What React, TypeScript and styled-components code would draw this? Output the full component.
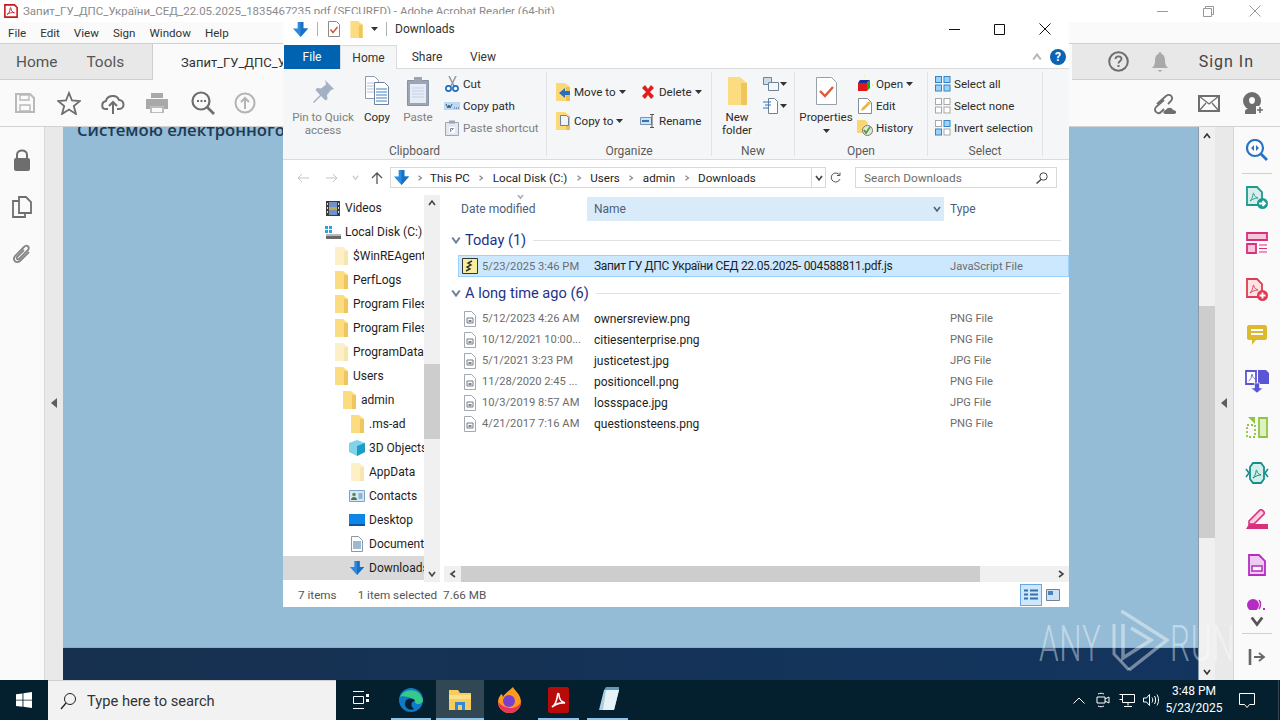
import React from "react";
import styled, { createGlobalStyle } from "styled-components";

const GlobalStyle = createGlobalStyle`
    html, body {
        margin: 0;
        padding: 0;
        background: #fff;
    }
    body {
        font-family: "Roboto", "Liberation Sans", sans-serif;
        overflow: hidden;
    }
    * {
        box-sizing: border-box;
    }
    svg {
        display: block;
        flex: none;
    }
`;

type IconProps = { size?: number };

const Ico = ({ w, h, children }: { w: number; h?: number; children: React.ReactNode }) => (
    <svg width={w} height={h ?? w} viewBox={`0 0 ${w} ${h ?? w}`} fill="none">
        {children}
    </svg>
);

// explorer icons
const DownArrow = ({ size = 18 }: IconProps) => (
    <svg width={size} height={size} viewBox="0 0 18 18">
        <path d="M6 1h6v7h5l-8 9-8-9h5z" fill="#2b8ade" />
        <path d="M9 17l8-9h-5V1H9z" fill="#1b6fc2" />
    </svg>
);

const Folder = ({ pale, w = 13, h = 18 }: { pale?: boolean; w?: number; h?: number }) => (
    <svg width={w} height={h} viewBox="0 0 13 18">
        <path d="M0 0h8l5 4v14H0z" fill={pale ? "#fdf0c8" : "#fcdc80"} />
        <path d="M9 4h4v14H9z" fill={pale ? "#f8e6b0" : "#f2c55c"} />
    </svg>
);

const CheckDoc = ({ size = 16 }: IconProps) => (
    <svg width={size} height={size} viewBox="0 0 16 16" fill="none">
        <path d="M2.5.5h8l3 3v12h-11z" fill="#fff" stroke="#8b8b8b" />
        <path d="M4.5 8.5l2.5 3 4.5-5.5" stroke="#d9573a" strokeWidth="1.6" />
    </svg>
);

const Caret = () => (
    <svg width="7" height="4" viewBox="0 0 7 4">
        <path d="M0 0h7L3.5 4z" fill="#333" />
    </svg>
);

const PinIcon = () => (
    <Ico w={24}>
        <path d="M14 1l9 9-3 1-4 5 .5 4-2 1.5-4.5-4.5-7 7-1-1 7-7L4.5 11 6 9l4 .5 5-4z" fill="#a3b1c4" />
    </Ico>
);

const CopyIcon = () => (
    <Ico w={26} h={30}>
        <path d="M1.5.5h9l4 4v18h-13z" fill="#fff" stroke="#8c9bb0" />
        <path d="M3 7h9M3 10h9M3 13h9M3 16h9" stroke="#b4c3d8" />
        <path d="M10.5 6.5h10l4 4v18h-14z" fill="#fff" stroke="#6d7f99" />
        <path d="M12 13h11M12 16h11M12 19h11M12 22h11M12 25h11" stroke="#3f7fc9" />
    </Ico>
);

const PasteIcon = () => (
    <Ico w={22} h={30}>
        <path d="M.5 4.5h21v25H.5z" fill="#9aa5b5" stroke="#8793a5" />
        <path d="M3 8h16v19H3z" fill="#e6ecf5" />
        <path d="M5 12h12M5 15h12M5 18h12M5 21h12" stroke="#c5d1e2" />
        <path d="M7 4V1h8v3l2 2H5z" fill="#9aa5b5" />
    </Ico>
);

const Scissors = () => (
    <Ico w={16}>
        <path d="M5 0l5 10M12 0L7 10" stroke="#8f99a8" strokeWidth="1.5" />
        <circle cx="4.5" cy="12.5" r="2.6" stroke="#1e6cbd" strokeWidth="1.6" />
        <circle cx="11.5" cy="12.5" r="2.6" stroke="#1e6cbd" strokeWidth="1.6" />
    </Ico>
);

const CopyPathIcon = () => (
    <Ico w={16} h={10}>
        <path d="M0 1h16v8H0z" fill="#bcd8f5" />
        <path d="M2 3l2 4 1-3 1 3 2-4M10 7h1M12 7h1M14 7h1" stroke="#36597f" />
    </Ico>
);

const ShortcutIcon = () => (
    <Ico w={14} h={16}>
        <path d="M.5 2.5h13v13H.5z" fill="#e3e8f0" stroke="#9aa5b5" />
        <path d="M4 .5h6v3H4z" fill="#9aa5b5" />
        <path d="M4 7h6v6H4z" fill="#fff" />
        <path d="M5.5 12V8.5h3M8.5 8.5l-2 2" stroke="#7d8ba0" />
    </Ico>
);

const MoveToIcon = ({ copy }: { copy?: boolean }) => (
    <Ico w={14} h={18}>
        <path d="M0 0h9l5 4v14H0z" fill="#fbd976" />
        <path d="M10 4h4v14h-4z" fill="#eebf52" />
        {copy ? (
            <path d="M4.5 3.5h6l2 2v8h-8z" fill="#f1f3f6" stroke="#6f7f95" />
        ) : (
            <path d="M14 8v4H9v3L3 10l6-5v3z" fill="#2c6ebe" />
        )}
    </Ico>
);

const DeleteIcon = () => (
    <Ico w={14}>
        <path d="M1 3l3-3 3 4 3-4 3 3-4 4 4 4-3 3-3-4-3 4-3-3 4-4z" fill="#e21b1b" />
    </Ico>
);

const RenameIcon = () => (
    <Ico w={17} h={14}>
        <path d="M.5 3.5h11v7H.5z" fill="#cfe2f5" stroke="#7d95ad" />
        <path d="M2 6h7v2H2z" fill="#2c74c4" />
        <path d="M10 .5h4M10 13.5h4M12 .5v13" stroke="#555" />
    </Ico>
);

const NewFolderIcon = () => (
    <Ico w={19} h={28}>
        <path d="M0 0h12l7 6v22H0z" fill="#fcdc80" />
        <path d="M13 6h6v22h-6z" fill="#f2c55c" />
    </Ico>
);

const NewItemIcon = () => (
    <Ico w={16} h={14}>
        <path d="M.5.5h8v7h-8z" fill="#cfdcea" stroke="#6f8398" />
        <path d="M5.5 5.5h10v8h-10z" fill="#f5f7fa" stroke="#6f8398" />
    </Ico>
);

const EasyAccessIcon = () => (
    <Ico w={16} h={16}>
        <path d="M5.5.5h6l3 3v12h-9z" fill="#fff" stroke="#6f8398" />
        <path d="M0 4h8M2 7h6M0 10h5" stroke="#2c74c4" />
    </Ico>
);

const PropertiesIcon = () => (
    <Ico w={21} h={28}>
        <path d="M.5.5h15l5 5v22H.5z" fill="#fff" stroke="#9aa0a8" />
        <path d="M4 14l5 5 8-9" stroke="#dd5b36" strokeWidth="2.4" />
    </Ico>
);

const OpenIcon = () => (
    <Ico w={16}>
        <path d="M1 7h9v8H1z" fill="#e01717" />
        <path d="M3 4h10l-3 3H1z" fill="#1f2d9c" />
        <path d="M10 7l3-3v8l-3 3z" fill="#1ba81b" />
        <path d="M7 0h1M15 9h1" stroke="#e8d800" />
    </Ico>
);

const EditIcon = () => (
    <Ico w={14} h={16}>
        <path d="M.5.5h9l4 4v11H.5z" fill="#fff" stroke="#858d98" />
        <path d="M3 13l1-3 7-7 2 2-7 7z" fill="#e9b84c" />
    </Ico>
);

const HistoryIcon = () => (
    <Ico w={16}>
        <path d="M0 0h8l3 3v10H0z" fill="#f9d873" />
        <circle cx="10.5" cy="10.5" r="5" fill="#e4e4e4" stroke="#7a7a7a" />
        <path d="M7 10l2 3 4-6" stroke="#4aa02c" strokeWidth="1.6" />
    </Ico>
);

const SelectGrid = ({ mode }: { mode: "all" | "none" | "invert" }) => {
    const on = (i: number) => (mode === "all" ? true : mode === "none" ? false : i === 1 || i === 2);
    return (
        <Ico w={16}>
            {[0, 1, 2, 3].map((i) => (
                <rect
                    key={i}
                    x={0.5 + (i % 2) * 8.5}
                    y={0.5 + Math.floor(i / 2) * 8.5}
                    width="6"
                    height="6"
                    fill={on(i) ? "#9fd0f5" : "#fff"}
                    stroke={on(i) ? "#2f86c9" : "#a8a8a8"}
                />
            ))}
        </Ico>
    );
};

const VideosIcon = () => (
    <Ico w={14} h={15}>
        <path d="M0 0h14v15H0z" fill="#3b3b3b" />
        <path d="M3 1h8v13H3z" fill="#6f93c9" />
        <path d="M3 6h8v3H3z" fill="#c5a94b" />
        <path d="M1 2h1v2H1zM1 6h1v2H1zM1 10h1v2H1zM12 2h1v2h-1zM12 6h1v2h-1zM12 10h1v2h-1z" fill="#ddd" />
    </Ico>
);

const DiskIcon = () => (
    <Ico w={16} h={14}>
        <path d="M1 9h15v5H1z" fill="#686868" />
        <path d="M1 9h15v2H1z" fill="#b9b9b9" />
        <path d="M0 1h3v3H0zM4 1h3v3H4zM0 5h3v3H0zM4 5h3v3H4z" fill="#2aa3dc" />
    </Ico>
);

const ObjectsIcon = () => (
    <Ico w={16}>
        <path d="M8 0l8 3v9l-8 4-8-4V3z" fill="#7fd3ea" />
        <path d="M8 6l8-3v9l-8 4z" fill="#1b9cc9" />
    </Ico>
);

const ContactsIcon = () => (
    <Ico w={16} h={12}>
        <path d="M.5.5h15v11H.5z" fill="#d6e7f7" stroke="#7ba3c9" />
        <circle cx="5" cy="4.5" r="1.8" fill="#5b8c5a" />
        <path d="M2 10c0-4 6-4 6 0z" fill="#47793f" />
        <path d="M9.5 4h4M9.5 6h4M9.5 8h4" stroke="#4d7fb3" />
    </Ico>
);

const DesktopIcon = () => (
    <Ico w={16} h={12}>
        <path d="M0 0h16v12H0z" fill="#0d86e6" />
        <path d="M0 10h16v2H0z" fill="#0558a8" />
    </Ico>
);

const DocumentsIcon = () => (
    <Ico w={12} h={16}>
        <path d="M.5.5h7l4 4v11H.5z" fill="#fff" stroke="#8a98a8" />
        <path d="M2 6h8M2 8h8M2 10h8M2 12h8" stroke="#3f73aa" />
    </Ico>
);

const ScriptIcon = () => (
    <Ico w={16}>
        <path d="M.5.5h15v15H.5z" fill="#f7ef9e" stroke="#333" />
        <path d="M10 3L6 5l3 2-4 2 3 2-4 2" stroke="#333" strokeWidth="1.4" />
    </Ico>
);

const ImageFileIcon = () => (
    <Ico w={12} h={16}>
        <path d="M.5.5h7l4 4v11H.5z" fill="#fff" stroke="#a3a9b0" />
        <path d="M3 7h6v5H3z" fill="#fff" stroke="#737b85" />
        <path d="M4.5 9h3v2h-3z" fill="#7d858f" />
    </Ico>
);

const Chevron = ({ dir, color = "#555", size = 8 }: { dir: "up" | "down" | "left" | "right"; color?: string; size?: number }) => {
    const paths = { up: "M1 6l3-4 3 4", down: "M1 2l3 4 3-4", left: "M6 1L2 4l4 3", right: "M2 1l4 3-4 3" };
    return (
        <svg width={size} height={size} viewBox="0 0 8 8" fill="none">
            <path d={paths[dir]} stroke={color} strokeWidth="1.6" />
        </svg>
    );
};

// acrobat icons
const PdfMark = ({ size = 14 }: IconProps) => (
    <svg width={size} height={size} viewBox="0 0 16 16" fill="none">
        <path d="M1 1h11l3 3v11H1z" fill="#fff" stroke="#c8161d" strokeWidth="1.8" />
        <path d="M3.5 12c2-1 3.5-4 3.5-7 0-1.500 1-1 1 0 0 3 2 4.500 4 5-3-.5-6 0-8.500 2z" stroke="#c8161d" />
    </svg>
);

const grey = "#6e6e6e";

const SaveTool = () => (
    <Ico w={20}>
        <path d="M1 1h14l4 4v14H1z" fill="#fafafa" stroke="#b9b9b9" strokeWidth="2" />
        <path d="M5 2h9v5H5zM5 12h10v6H5z" stroke="#b9b9b9" strokeWidth="1.4" />
    </Ico>
);
const StarTool = () => (
    <Ico w={24}>
        <path d="M12 2l3 7.500 8 .5-6.200 5 2.200 8-7-4.500L5 23l2.200-8L1 10l8-.5z" stroke={grey} strokeWidth="1.8" />
    </Ico>
);
const UploadTool = () => (
    <Ico w={24}>
        <path d="M7 18H5c-5 0-5-7 0-8 1-6 11-7 13-1 6 0 6 9 0 9h-2" stroke={grey} strokeWidth="2" />
        <path d="M12 23V11M8 15l4-4 4 4" stroke={grey} strokeWidth="2" />
    </Ico>
);
const PrintTool = () => (
    <Ico w={22} h={20}>
        <path d="M5 0h12v5H5zM0 6h22v10h-4v-3H4v3H0z" fill="#a9a9a9" />
        <path d="M5 14h12v6H5z" stroke="#a9a9a9" strokeWidth="1.500" />
    </Ico>
);
const SearchTool = ({ color = grey }: { color?: string }) => (
    <Ico w={24}>
        <circle cx="10" cy="10" r="8.500" stroke={color} strokeWidth="2.200" />
        <path d="M16 16l7 7" stroke={color} strokeWidth="2.600" />
        <path d="M6 10h2M9.500 10h2M13 10h2" stroke={color} strokeWidth="2" />
    </Ico>
);
const UpTool = () => (
    <Ico w={22}>
        <circle cx="11" cy="11" r="9.500" stroke="#b4b4b4" strokeWidth="2" />
        <path d="M11 17V6M7 10l4-4 4 4" stroke="#b4b4b4" strokeWidth="2" />
    </Ico>
);
const LinkTool = () => (
    <Ico w={24}>
        <path d="M3 13l9-8c4-3 8 1 5 5l-3 3" stroke={grey} strokeWidth="1.800" />
        <path d="M10 9L2 16c-3 4 2 8 5 5l3-3" stroke={grey} strokeWidth="1.800" />
        <path d="M12 23c-4 0-3-4 0-4 1-3 6-3 7 0 4 0 4 4 1 4z" fill={grey} />
    </Ico>
);
const MailTool = () => (
    <Ico w={22} h={17}>
        <path d="M1 1h20v15H1z" stroke={grey} strokeWidth="2" />
        <path d="M1 1l10 8 10-8M1 16l7-8M21 16l-7-8" stroke={grey} strokeWidth="1.300" />
    </Ico>
);
const UserTool = () => (
    <Ico w={22}>
        <circle cx="10" cy="9" r="9" fill={grey} />
        <path d="M7 8c0-4 6-4 6 0 0 3-2 4-3 4S7 11 7 8z" fill="#fafafa" />
        <path d="M3 19c1-4 13-4 14 0v3H3z" fill={grey} />
        <path d="M14 14h8v8h-8z" fill="#fafafa" />
        <path d="M18 15v6M15 18h6" stroke={grey} strokeWidth="1.600" />
    </Ico>
);
const HelpTool = () => (
    <svg width="21" height="21" viewBox="0 0 21 21" fill="none">
        <circle cx="10.500" cy="10.500" r="9.300" stroke={grey} strokeWidth="2" />
        <path d="M7.500 8c0-3.500 6-3.500 6 0 0 2-3 2-3 4.500" stroke={grey} strokeWidth="1.800" />
        <path d="M9.500 14h2v2h-2z" fill={grey} />
    </svg>
);
const BellTool = () => (
    <Ico w={18} h={20}>
        <path d="M9 0c1 0 1.500 1 1.500 2 3 1 3.500 4 3.500 7 0 3 1 5 3 7H1c2-2 3-4 3-7 0-3 .5-6 3.500-7C7.500 1 8 0 9 0z" fill="#a9a9a9" />
        <path d="M6.500 18h5L9 20z" fill="#a9a9a9" />
    </Ico>
);
const LockTool = () => (
    <Ico w={18} h={22}>
        <path d="M4 10V6c0-6 10-6 10 0v4" stroke={grey} strokeWidth="2" />
        <rect x="1" y="9" width="16" height="13" rx="2" fill={grey} />
    </Ico>
);
const PagesTool = () => (
    <Ico w={20} h={22}>
        <path d="M7 1h7l5 5v11H7z" stroke={grey} strokeWidth="1.800" />
        <path d="M7 5H1v16h12v-4" stroke={grey} strokeWidth="1.800" />
    </Ico>
);
const ClipTool = () => (
    <Ico w={20} h={22}>
        <path d="M17 9l-9 9c-4 3-8-1-5-5L12 4c3-3 6 0 4 3l-9 9c-1 1-3 0-2-2l7-7" stroke="#848484" strokeWidth="1.800" />
    </Ico>
);

const SideDoc = ({ stroke, fill, badge, sign }: { stroke: string; fill: string; badge: string; sign: string }) => (
    <Ico w={22} h={23}>
        <path d="M1 1h10l5 5v13H1z" fill={fill} stroke={stroke} strokeWidth="1.800" />
        <path d="M4 15c2-2 3-5 3-7 0-1 1-1 1 0 0 2 2 3 4 4-3 0-5 1-8 3z" stroke={stroke} strokeWidth=".9" />
        <circle cx="16.500" cy="17.500" r="5.500" fill={badge} />
        <path d={sign} stroke="#fff" strokeWidth="1.800" />
    </Ico>
);

function SearchGlass() {
    return (
        <Ico w={22}>
            <circle cx="9" cy="9" r="8" fill="#fff" stroke="#2a72c4" strokeWidth="2.200" />
            <path d="M15 15l6 6" stroke="#2a72c4" strokeWidth="2.800" />
            <path d="M8 6L5 9l3 3zM10 6l3 3-3 3z" fill="#2a72c4" />
        </Ico>
    );
}

const rightIcons = [
    <SideDoc key="b" stroke="#1d9a8e" fill="#d9eeec" badge="#1d9a8e" sign="M13 17.500h6M16.500 15l2.500 2.500-2.500 2.500" />,
    <Ico w={22} h={22} key="c">
        <path d="M1 1h20v7H1z" fill="#f7c6dc" stroke="#d9307e" strokeWidth="1.800" />
        <path d="M1 12h9v9H1z" fill="#f7c6dc" stroke="#d9307e" strokeWidth="1.800" />
        <path d="M13 13h8M13 16.500h8M13 20h8" stroke="#d9307e" />
    </Ico>,
    <SideDoc key="d" stroke="#e03b52" fill="#fbe3e6" badge="#e03b52" sign="M13.500 17.500h6M16.500 14.500v6" />,
    <Ico w={20} h={20} key="e">
        <path d="M2 0h16c1 0 2 1 2 2v11c0 1-1 2-2 2H9l-4 5v-5H2c-1 0-2-1-2-2V2C0 1 1 0 2 0z" fill="#dcb92f" />
        <path d="M4 5h12M4 9h12" stroke="#fff" strokeWidth="1.800" />
    </Ico>,
    <Ico w={24} h={24} key="f">
        <path d="M1 2h10v13H1z" fill="#fff" stroke="#5a55d6" strokeWidth="1.800" />
        <path d="M3.500 12c2-1 3-3 3-6 0-1 1-1 1 0 0 2 1 3 2.500 4" stroke="#5a55d6" strokeWidth=".8" />
        <path d="M13 1h8l3 3v11H13z" fill="#5a55d6" />
        <path d="M9.500 14h5v5h3.500l-6 5-6-5h3.500z" fill="#5a55d6" stroke="#fafafa" strokeWidth=".6" />
    </Ico>,
    <Ico w={22} h={22} key="g">
        <path d="M1 9h8v12H1z" stroke="#8ec63f" strokeWidth="1.800" strokeDasharray="2 2" />
        <path d="M13 2h8v19h-8z" fill="#dff0c4" stroke="#8ec63f" strokeWidth="1.800" />
        <path d="M2 1l7 0v7z" fill="#8ec63f" />
    </Ico>,
    <Ico w={24} h={22} key="h">
        <path d="M5 5l3-4h8l3 4v12l-3 4H8l-3-4z" fill="#d4eeea" stroke="#14908a" strokeWidth="1.800" />
        <path d="M1 7l3 4-3 4M23 7l-3 4 3 4" stroke="#14908a" strokeWidth="1.600" />
        <path d="M8 16c2-2 3-5 3-7 0-1 1-1 1 0 0 2 2 3 4 4-3 0-5 1-8 3z" stroke="#14908a" />
    </Ico>,
    <Ico w={22} h={20} key="i">
        <path d="M3 12L14 1c2-1 5 2 4 4L8 15H3z" fill="#f9cfe2" stroke="#d9307e" strokeWidth="1.600" />
        <path d="M0 20l3-5h19v5z" fill="#d9307e" />
    </Ico>,
    <Ico w={18} h={22} key="j">
        <path d="M1 1h10l6 6v14H1z" fill="#eecbf2" stroke="#b42cc2" strokeWidth="1.800" />
        <path d="M4 12h10v5H4z" fill="#fff" stroke="#b42cc2" strokeWidth="1.500" />
    </Ico>,
];

// Page
const Screen = styled.div`
    position: relative;
    width: 1280px;
    height: 720px;
    overflow: hidden;
    display: flex;
    flex-direction: column;
`;

const AcrobatWindow = styled.div`
    height: 680px;
    display: flex;
    flex-direction: column;
    background: #fff;
`;

const AppTitleBar = styled.div`
    height: 22px;
    display: flex;
    align-items: center;
    padding: 0 0 0 4px;
    gap: 5px;
    background: #fff;
    font-size: 11.5px;
    color: #8a8a8a;
    white-space: nowrap;
`;

const AppControls = styled.div`
    margin-left: auto;
    display: flex;
    align-items: center;
    gap: 35px;
    padding-right: 19px;
`;

const MenuBar = styled.div`
    height: 21px;
    display: flex;
    align-items: center;
    gap: 14px;
    padding: 0 8px;
    background: #fafafa;
    font-size: 11.6px;
    color: #333;
`;

const TabRow = styled.div`
    height: 37px;
    display: flex;
    align-items: stretch;
    background: #e8e8e8;
    border-top: 1px solid #cfcfcf;
    border-bottom: 1px solid #cfcfcf;
`;

const AppTab = styled.div<{ $left: number }>`
    display: flex;
    align-items: center;
    font-size: 15.4px;
    color: #555;
    margin-left: ${(p) => p.$left}px;
`;

const OpenTab = styled.div`
    width: 920px;
    margin-left: 28px;
    margin-bottom: -1px;
    padding-left: 28px;
    display: flex;
    align-items: center;
    background: #fafafa;
    border-left: 1px solid #cfcfcf;
    font-size: 13px;
    color: #333;
`;

const TabRight = styled.div`
    margin-left: auto;
    display: flex;
    align-items: center;
    padding-right: 26px;
`;

const SignIn = styled.span`
    margin-left: 30px;
    font-size: 16px;
    color: #444;
    letter-spacing: 1px;
`;

const ToolRow = styled.div`
    height: 47px;
    display: flex;
    align-items: center;
    padding-left: 15px;
    background: #fafafa;
    border-bottom: 1px solid #d2d2d2;
`;

const ToolGap = styled.span<{ $w: number }>`
    width: ${(p) => p.$w}px;
    flex: none;
`;

const Spacer = styled.span`
    flex: 1;
`;

const DocArea = styled.div`
    flex: 1;
    min-height: 0;
    display: flex;
`;

const LeftRail = styled.div`
    width: 45px;
    display: flex;
    flex-direction: column;
    align-items: center;
    padding-top: 22px;
    gap: 25px;
    padding-right: 1px;
    background: #fafafa;
    border-right: 1px solid #d8d8d8;
`;

const Gutter = styled.div`
    width: 18px;
    display: flex;
    align-items: center;
    justify-content: center;
    padding-bottom: 2px;
    background: #e9e9e9;
`;

const GutterRight = styled(Gutter)`
    border-right: 1px solid #d8d8d8;
    width: 19px;
`;

const Triangle = styled.span`
    width: 0;
    height: 0;
    border-top: 5px solid transparent;
    border-bottom: 5px solid transparent;
    border-right: 6px solid #5e5e5e;
`;

const PageView = styled.div`
    flex: 1;
    display: flex;
    flex-direction: column;
    min-width: 0;
    overflow: hidden;
`;

const PageLight = styled.div`
    flex: 1;
    background: #94bcd6;
    padding-left: 14px;
    overflow: hidden;
`;

const PageHeading = styled.div`
    margin-top: -8px;
    font-family: "Open Sans", sans-serif;
    font-weight: 600;
    font-size: 16.7px;
    line-height: 22px;
    color: #1d3a55;
    white-space: nowrap;
`;

const PageDark = styled.div`
    height: 33px;
    background: linear-gradient(90deg, #17304f, #12355f);
    border-top: 1px solid #8aaecb;
`;

const DocScroll = styled.div`
    width: 17px;
    display: flex;
    flex-direction: column;
    align-items: center;
    background: #f0f0f0;
    border-left: 1px solid #8a9aa6;
`;

const ArrowCell = styled.div`
    height: 17px;
    flex: none;
    display: flex;
    align-items: center;
    justify-content: center;
`;

const DocThumb = styled.div`
    width: 100%;
    height: 232px;
    margin-top: 162px;
    margin-bottom: auto;
    background: #cdcdcd;
`;

const RightRail = styled.div`
    width: 46px;
    display: flex;
    flex-direction: column;
    align-items: center;
    background: #fafafa;
    overflow: hidden;
`;

const RailSlot = styled.div`
    height: 46px;
    width: 100%;
    flex: none;
    display: flex;
    align-items: center;
    justify-content: center;
`;

const RailRule = styled.div`
    width: 30px;
    height: 1px;
    flex: none;
    background: #d0d0d0;
`;

const RailClip = styled.div`
    height: 11px;
    margin-top: 11px;
    flex: none;
    display: flex;
    align-items: flex-start;
    overflow: hidden;
`;

const RailMore = styled.div`
    height: 21px;
    margin-bottom: 2px;
    flex: none;
    display: flex;
    align-items: center;
    justify-content: center;
`;

// explorer window
const Explorer = styled.div`
    position: absolute;
    left: 283px;
    top: 14px;
    width: 786px;
    height: 593px;
    display: flex;
    flex-direction: column;
    background: #fff;
    font-size: 12px;
    color: #1e1e1e;
`;

const ExTitle = styled.div`
    height: 30px;
    flex: none;
    display: flex;
    align-items: center;
    padding-left: 9px;
    color: #333;
`;

const Sep = styled.span`
    width: 1px;
    height: 14px;
    margin: 0 8px;
    background: #b0b0b0;
`;

const QuickIcon = styled.span<{ $right: number }>`
    margin-right: ${(p) => p.$right}px;
`;

const WinControls = styled.div`
    margin-left: auto;
    display: flex;
    align-items: center;
    padding-right: 18px;
    gap: 34px;
`;

const ExTabs = styled.div`
    height: 25px;
    flex: none;
    display: flex;
    align-items: flex-end;
    padding-left: 1px;
    position: relative;
    z-index: 1;
`;

const FileTab = styled.div`
    width: 56px;
    height: 24px;
    display: flex;
    align-items: center;
    justify-content: center;
    background: #0063b1;
    color: #fff;
`;

const RibbonTab = styled.div<{ $active?: boolean; $w: number }>`
    width: ${(p) => p.$w}px;
    height: 24px;
    display: flex;
    align-items: center;
    justify-content: center;
    color: #333;
    background: ${(p) => (p.$active ? "#f5f6f7" : "transparent")};
    border: ${(p) => (p.$active ? "1px solid #dadbdc" : "0")};
    border-bottom: 0;
`;

const TabEnd = styled.div`
    margin-left: auto;
    height: 24px;
    display: flex;
    align-items: center;
    gap: 8px;
    padding-right: 3px;
`;

const HelpBubble = styled.span`
    width: 16px;
    height: 16px;
    border-radius: 50%;
    background: #0a64b4;
    color: #fff;
    font-size: 12px;
    font-weight: 700;
    display: flex;
    align-items: center;
    justify-content: center;
`;

const Ribbon = styled.div`
    height: 92px;
    flex: none;
    display: flex;
    background: #f5f6f7;
    border-top: 1px solid #dadbdc;
    border-bottom: 1px solid #dadbdc;
    margin-top: -1px;
    font-size: 11.6px;
`;

const Group = styled.div<{ $w: number }>`
    width: ${(p) => p.$w}px;
    flex: none;
    display: flex;
    flex-direction: column;
    position: relative;
    &::after {
        content: "";
        position: absolute;
        right: 0;
        top: 3px;
        bottom: 3px;
        width: 1px;
        background: #e1e3e6;
    }
`;

const GroupBody = styled.div<{ $pad: number; $gap?: number }>`
    height: 74px;
    display: flex;
    padding: 4px 0 0 ${(p) => p.$pad}px;
    gap: ${(p) => p.$gap ?? 0}px;
`;

const GroupLabel = styled.div`
    text-align: center;
    font-size: 12px;
    line-height: 16px;
    padding-right: 1px;
    color: #5b5b5b;
`;

const BigButton = styled.div<{ $w: number; $muted?: boolean }>`
    width: ${(p) => p.$w}px;
    flex: none;
    display: flex;
    flex-direction: column;
    align-items: center;
    text-align: center;
    line-height: 13px;
    color: ${(p) => (p.$muted ? "#808080" : "#2b2b2b")};
`;

const BigIcon = styled.div`
    height: 35px;
    display: flex;
    align-items: center;
    justify-content: center;
    margin-bottom: 3px;
`;

const CaretBelow = styled.div`
    margin-top: 5px;
`;

const SmallStack = styled.div<{ $gap?: number; $top?: number; $w?: number; $left?: number }>`
    display: flex;
    flex-direction: column;
    flex: none;
    gap: ${(p) => p.$gap ?? 0}px;
    margin-top: ${(p) => p.$top ?? 0}px;
    margin-left: ${(p) => p.$left ?? 0}px;
    width: ${(p) => (p.$w ? `${p.$w}px` : "auto")};
`;

const SmallButton = styled.div<{ $muted?: boolean }>`
    height: 22px;
    display: flex;
    align-items: center;
    gap: 3px;
    white-space: nowrap;
    color: ${(p) => (p.$muted ? "#808080" : "#2b2b2b")};
`;

const TinyButton = styled(SmallButton)`
    gap: 1px;
`;

const SmallIcon = styled.span`
    width: 16px;
    display: flex;
    justify-content: center;
    flex: none;
`;

const AddressRow = styled.div`
    height: 35px;
    flex: none;
    display: flex;
    align-items: center;
    padding-left: 5px;
`;

const NavArrow = styled.span<{ $w: number }>`
    width: ${(p) => p.$w}px;
    flex: none;
    display: flex;
    justify-content: center;
`;

const AddressBox = styled.div`
    width: 436px;
    height: 21px;
    display: flex;
    align-items: center;
    padding-left: 2px;
    border: 1px solid #d9d9d9;
    color: #1e1e1e;
    font-size: 11.6px;
`;

const Crumb = styled.span`
    white-space: nowrap;
`;

const CrumbSep = styled.span<{ $w?: number }>`
    width: ${(p) => p.$w ?? 23}px;
    flex: none;
    display: flex;
    justify-content: center;
`;

const AddressEnd = styled.span`
    margin-left: auto;
    width: 14px;
    height: 100%;
    display: flex;
    align-items: center;
    justify-content: center;
    border-left: 1px solid #d9d9d9;
`;

const Refresh = styled.span`
    width: 18px;
    display: flex;
    justify-content: center;
`;

const SearchBox = styled.div`
    width: 202px;
    height: 21px;
    margin-left: 11px;
    display: flex;
    align-items: center;
    justify-content: space-between;
    padding: 0 8px;
    border: 1px solid #d9d9d9;
    color: #6d6d6d;
    font-size: 11.8px;
`;

const Panes = styled.div`
    flex: 1;
    min-height: 0;
    display: flex;
`;

const NavPane = styled.div`
    width: 141px;
    flex: none;
    overflow: hidden;
    padding-top: 1px;
`;

const NavRow = styled.div<{ $level: number; $selected?: boolean }>`
    height: 24px;
    display: flex;
    align-items: center;
    padding-left: ${(p) => 41 + p.$level * 8}px;
    background: ${(p) => (p.$selected ? "#d9d9d9" : "transparent")};
    white-space: nowrap;
    overflow: hidden;
    color: #1e1e1e;
`;

const NavIcon = styled.span`
    width: 21px;
    flex: none;
    display: flex;
    justify-content: center;
    padding-right: 3px;
`;

const NavScroll = styled.div`
    width: 16px;
    flex: none;
    display: flex;
    flex-direction: column;
    background: #f0f0f0;
`;

const ScrollCell = styled.div`
    height: 16px;
    flex: none;
    display: flex;
    align-items: center;
    justify-content: center;
`;

const NavThumb = styled.div`
    height: 75px;
    margin-top: 153px;
    margin-bottom: auto;
    background: #cdcdcd;
`;

const FilePane = styled.div`
    flex: 1;
    min-width: 0;
    display: flex;
    flex-direction: column;
    margin-left: 1px;
`;

const FileScrollArea = styled.div`
    flex: 1;
    min-height: 0;
    overflow: hidden;
    padding-top: 2px;
`;

const HeaderRow = styled.div`
    height: 24px;
    display: flex;
    align-items: stretch;
    color: #4c607a;
    padding-left: 20px;
`;

const HeaderDate = styled.div`
    width: 126px;
    display: flex;
    align-items: center;
    position: relative;
`;

const SortMark = styled.span`
    position: absolute;
    left: 56px;
    top: -4px;
`;

const HeaderName = styled.div`
    width: 357px;
    display: flex;
    align-items: center;
    justify-content: space-between;
    padding: 0 3px 0 7px;
    background: #d9ebf9;
`;

const HeaderType = styled.div`
    display: flex;
    align-items: center;
    padding-left: 6px;
`;

const GroupHead = styled.div<{ $top: number; $bottom: number }>`
    height: 24px;
    margin-top: ${(p) => p.$top}px;
    margin-bottom: ${(p) => p.$bottom}px;
    display: flex;
    align-items: center;
    padding: 0 8px 0 10px;
    font-size: 14.6px;
    color: #1e3287;
    white-space: nowrap;
`;

const GroupRule = styled.span`
    flex: 1;
    height: 1px;
    margin-left: 7px;
    background: #e2e2e2;
`;

const HeadChevron = styled.span`
    margin-right: 4px;
`;

const FileRow = styled.div<{ $selected?: boolean }>`
    height: ${(p) => (p.$selected ? 22 : 21)}px;
    margin-left: 17px;
    display: grid;
    grid-template-columns: 21px 112px 356px 1fr;
    align-items: center;
    padding-left: 3px;
    background: ${(p) => (p.$selected ? "#cce8ff" : "transparent")};
    outline: ${(p) => (p.$selected ? "1px solid #99d1ff" : "none")};
    outline-offset: -1px;
`;

const FileIcon = styled.span`
    display: flex;
    justify-content: center;
    padding-right: 3px;
`;

const FileMeta = styled.span`
    color: #6d6d6d;
    font-size: 11.2px;
    white-space: nowrap;
    overflow: hidden;
`;

const FileName = styled.span<{ $tight?: boolean }>`
    color: #1e1e1e;
    white-space: nowrap;
    letter-spacing: ${(p) => (p.$tight ? "-0.32px" : "0")};
`;

const HScroll = styled.div`
    height: 16px;
    flex: none;
    margin-left: 3px;
    display: flex;
    background: #f0f0f0;
`;

const HCell = styled.div`
    width: 17px;
    flex: none;
    display: flex;
    align-items: center;
    justify-content: center;
`;

const HThumb = styled.div`
    width: 519px;
    background: #cdcdcd;
`;

const StatusBar = styled.div`
    height: 25px;
    flex: none;
    display: flex;
    align-items: center;
    padding-left: 15px;
    color: #555;
    font-size: 11.7px;
`;

const StatusGap = styled.span<{ $w: number }>`
    width: ${(p) => p.$w}px;
    flex: none;
`;

const ViewSwitch = styled.div`
    margin-left: auto;
    display: flex;
    padding-right: 5px;
`;

const ViewBtn = styled.span<{ $on?: boolean }>`
    width: 22px;
    height: 22px;
    display: flex;
    align-items: center;
    justify-content: center;
    background: ${(p) => (p.$on ? "#cce8ff" : "transparent")};
    border: 1px solid ${(p) => (p.$on ? "#66a7e8" : "transparent")};
`;

// watermark
const Watermark = styled.div`
    position: absolute;
    left: 1039px;
    top: 610px;
    width: 200px;
    height: 62px;
    display: flex;
    align-items: center;
    color: rgba(255, 255, 255, 0.42);
    font-family: "Roboto", sans-serif;
    font-weight: 300;
    font-size: 50px;
    pointer-events: none;
`;

const WaterText = styled.span<{ $w: number }>`
    display: inline-block;
    width: ${(p) => p.$w}px;
    flex: none;
    transform: scaleX(0.63);
    transform-origin: left center;
    white-space: nowrap;
    letter-spacing: 1px;
    line-height: 1;
    margin-top: 6px;
`;

const WaterLogo = styled.span`
    margin-left: 8px;
    margin-right: 1px;
`;

// taskbar
const Taskbar = styled.div`
    height: 40px;
    flex: none;
    display: flex;
    align-items: center;
    background: #04202e;
    color: #fff;
`;

const StartBtn = styled.div`
    width: 48px;
    height: 100%;
    display: flex;
    align-items: center;
    justify-content: center;
`;

const TaskSearch = styled.div`
    width: 288px;
    height: 100%;
    display: flex;
    align-items: center;
    padding-left: 12px;
    gap: 10px;
    background: #f2f2f2;
    border-top: 1px solid #d0d0d0;
    font-size: 14.7px;
    color: #333;
`;

const TaskSlot = styled.div<{ $w: number; $active?: boolean; $inset?: number }>`
    width: ${(p) => p.$w}px;
    height: 100%;
    flex: none;
    position: relative;
    display: flex;
    align-items: center;
    justify-content: center;
    background: ${(p) => (p.$active ? "#314754" : "transparent")};
    &::after {
        content: "";
        display: ${(p) => (p.$inset === undefined ? "none" : "block")};
        position: absolute;
        left: ${(p) => p.$inset}px;
        right: ${(p) => p.$inset}px;
        bottom: 0;
        height: 2px;
        background: #8fc3ea;
    }
`;

const Tray = styled.div`
    margin-left: auto;
    display: flex;
    align-items: center;
    height: 100%;
`;

const TrayIcon = styled.span<{ $w: number }>`
    width: ${(p) => p.$w}px;
    flex: none;
    display: flex;
    justify-content: center;
`;

const Clock = styled.div`
    width: 62px;
    text-align: center;
    font-size: 12px;
    line-height: 17px;
    white-space: nowrap;
`;

const NotifyWrap = styled.div`
    width: 44px;
    display: flex;
    justify-content: center;
    margin-right: 9px;
`;

const TrayEdge = styled.span`
    width: 1px;
    height: 100%;
    margin-right: 1px;
    background: #33464f;
`;

const navItems: { label: string; level: number; icon: React.ReactNode; selected?: boolean }[] = [
    { label: "Videos", level: 0, icon: <VideosIcon /> },
    { label: "Local Disk (C:)", level: 0, icon: <DiskIcon /> },
    { label: "$WinREAgent", level: 1, icon: <Folder pale /> },
    { label: "PerfLogs", level: 1, icon: <Folder /> },
    { label: "Program Files", level: 1, icon: <Folder /> },
    { label: "Program Files (x86)", level: 1, icon: <Folder /> },
    { label: "ProgramData", level: 1, icon: <Folder pale /> },
    { label: "Users", level: 1, icon: <Folder /> },
    { label: "admin", level: 2, icon: <Folder /> },
    { label: ".ms-ad", level: 3, icon: <Folder /> },
    { label: "3D Objects", level: 3, icon: <ObjectsIcon /> },
    { label: "AppData", level: 3, icon: <Folder pale /> },
    { label: "Contacts", level: 3, icon: <ContactsIcon /> },
    { label: "Desktop", level: 3, icon: <DesktopIcon /> },
    { label: "Documents", level: 3, icon: <DocumentsIcon /> },
    { label: "Downloads", level: 3, icon: <DownArrow size={16} />, selected: true },
];

const files = [
    ["5/12/2023 4:26 AM", "ownersreview.png", "PNG File"],
    ["10/12/2021 10:00...", "citiesenterprise.png", "PNG File"],
    ["5/1/2021 3:23 PM", "justicetest.jpg", "JPG File"],
    ["11/28/2020 2:45 ...", "positioncell.png", "PNG File"],
    ["10/3/2019 8:57 AM", "lossspace.jpg", "JPG File"],
    ["4/21/2017 7:16 AM", "questionsteens.png", "PNG File"],
];

const crumbs = ["This PC", "Local Disk (C:)", "Users", "admin", "Downloads"];

const Small = ({
    icon,
    label,
    muted,
    caret,
}: {
    icon: React.ReactNode;
    label: string;
    muted?: boolean;
    caret?: boolean;
}) => (
    <SmallButton $muted={muted}>
        <SmallIcon>{icon}</SmallIcon>
        {label}
        {caret && <Caret />}
    </SmallButton>
);

const ExplorerWindow = () => (
    <Explorer>
        <ExTitle>
            <DownArrow size={17} />
            <Sep />
            <QuickIcon $right={8}>
                <CheckDoc />
            </QuickIcon>
            <QuickIcon $right={8}>
                <Folder w={13} h={17} />
            </QuickIcon>
            <Caret />
            <Sep />
            Downloads
            <WinControls>
                <svg width="11" height="11" viewBox="0 0 11 11"><path d="M0 5.500h11" stroke="#111" /></svg>
                <svg width="11" height="11" viewBox="0 0 11 11" fill="none"><path d="M.5.500h10v10H.5z" stroke="#111" /></svg>
                <svg width="12" height="12" viewBox="0 0 12 12"><path d="M.5.500l11 11M11.500.500l-11 11" stroke="#111" /></svg>
            </WinControls>
        </ExTitle>
        <ExTabs>
            <FileTab>File</FileTab>
            <RibbonTab $active $w={57}>Home</RibbonTab>
            <RibbonTab $w={60}>Share</RibbonTab>
            <RibbonTab $w={52}>View</RibbonTab>
            <TabEnd>
                <Chevron dir="up" color="#b5b5b5" size={10} />
                <HelpBubble>?</HelpBubble>
            </TabEnd>
        </ExTabs>
        <Ribbon>
            <Group $w={264}>
                <GroupBody $pad={9}>
                    <BigButton $w={62} $muted>
                        <BigIcon><PinIcon /></BigIcon>
                        Pin to Quick
                        <br />
                        access
                    </BigButton>
                    <BigButton $w={46}>
                        <BigIcon><CopyIcon /></BigIcon>
                        Copy
                    </BigButton>
                    <BigButton $w={36} $muted>
                        <BigIcon><PasteIcon /></BigIcon>
                        Paste
                    </BigButton>
                    <SmallStack $left={8}>
                        <Small icon={<Scissors />} label="Cut" />
                        <Small icon={<CopyPathIcon />} label="Copy path" />
                        <Small icon={<ShortcutIcon />} label="Paste shortcut" muted />
                    </SmallStack>
                </GroupBody>
                <GroupLabel>Clipboard</GroupLabel>
            </Group>
            <Group $w={165}>
                <GroupBody $pad={8}>
                    <SmallStack $gap={7} $top={8} $w={85}>
                        <Small icon={<MoveToIcon />} label="Move to" caret />
                        <Small icon={<MoveToIcon copy />} label="Copy to" caret />
                    </SmallStack>
                    <SmallStack $gap={7} $top={8}>
                        <Small icon={<DeleteIcon />} label="Delete" caret />
                        <Small icon={<RenameIcon />} label="Rename" />
                    </SmallStack>
                </GroupBody>
                <GroupLabel>Organize</GroupLabel>
            </Group>
            <Group $w={83}>
                <GroupBody $pad={3} $gap={4}>
                    <BigButton $w={44}>
                        <BigIcon><NewFolderIcon /></BigIcon>
                        New folder
                    </BigButton>
                    <SmallStack>
                        <TinyButton><NewItemIcon /><Caret /></TinyButton>
                        <TinyButton><EasyAccessIcon /><Caret /></TinyButton>
                    </SmallStack>
                </GroupBody>
                <GroupLabel>New</GroupLabel>
            </Group>
            <Group $w={133}>
                <GroupBody $pad={3} $gap={3}>
                    <BigButton $w={56}>
                        <BigIcon><PropertiesIcon /></BigIcon>
                        Properties
                        <CaretBelow><Caret /></CaretBelow>
                    </BigButton>
                    <SmallStack>
                        <Small icon={<OpenIcon />} label="Open" caret />
                        <Small icon={<EditIcon />} label="Edit" />
                        <Small icon={<HistoryIcon />} label="History" />
                    </SmallStack>
                </GroupBody>
                <GroupLabel>Open</GroupLabel>
            </Group>
            <Group $w={115}>
                <GroupBody $pad={7}>
                    <SmallStack>
                        <Small icon={<SelectGrid mode="all" />} label="Select all" />
                        <Small icon={<SelectGrid mode="none" />} label="Select none" />
                        <Small icon={<SelectGrid mode="invert" />} label="Invert selection" />
                    </SmallStack>
                </GroupBody>
                <GroupLabel>Select</GroupLabel>
            </Group>
        </Ribbon>
        <AddressRow>
            <NavArrow $w={29}><svg width="12" height="10" viewBox="0 0 12 10" fill="none"><path d="M12 5H1M5 1L1 5l4 4" stroke="#c4c4c4" /></svg></NavArrow>
            <NavArrow $w={29}><svg width="12" height="10" viewBox="0 0 12 10" fill="none"><path d="M0 5h11M7 1l4 4-4 4" stroke="#c4c4c4" /></svg></NavArrow>
            <NavArrow $w={18}><Chevron dir="down" color="#cfcfcf" size={7} /></NavArrow>
            <NavArrow $w={26}><svg width="12" height="12" viewBox="0 0 12 12" fill="none"><path d="M6 12V1M1 6l5-5 5 5" stroke="#555" strokeWidth="1.300" /></svg></NavArrow>
            <AddressBox>
                <DownArrow size={17} />
                <CrumbSep $w={20}><Chevron dir="right" color="#8a8a8a" size={6} /></CrumbSep>
                {crumbs.map((c, i) => (
                    <React.Fragment key={c}>
                        {i > 0 && <CrumbSep><Chevron dir="right" color="#8a8a8a" size={6} /></CrumbSep>}
                        <Crumb>{c}</Crumb>
                    </React.Fragment>
                ))}
                <AddressEnd><Chevron dir="down" color="#444" /></AddressEnd>
            </AddressBox>
            <Refresh>
                <svg width="11" height="12" viewBox="0 0 11 12" fill="none"><path d="M9.500 3A4.500 4.500 0 1 0 10 7M10 .500V3.500H7" stroke="#555" /></svg>
            </Refresh>
            <SearchBox>
                Search Downloads
                <svg width="12" height="12" viewBox="0 0 12 12" fill="none"><circle cx="7.500" cy="4.500" r="3.700" stroke="#444" /><path d="M5 7.500L.5 11.500" stroke="#444" strokeWidth="1.400" /></svg>
            </SearchBox>
        </AddressRow>
        <Panes>
            <NavPane>
                {navItems.map((n) => (
                    <NavRow key={n.label} $level={n.level} $selected={n.selected}>
                        <NavIcon>{n.icon}</NavIcon>
                        {n.label}
                    </NavRow>
                ))}
            </NavPane>
            <NavScroll>
                <ScrollCell><Chevron dir="up" color="#444" /></ScrollCell>
                <NavThumb />
                <ScrollCell><Chevron dir="down" color="#444" /></ScrollCell>
            </NavScroll>
            <FilePane>
                <FileScrollArea>
                    <HeaderRow>
                        <HeaderDate>
                            <SortMark><Chevron dir="down" color="#a9a9a9" size={7} /></SortMark>
                            Date modified
                        </HeaderDate>
                        <HeaderName>
                            Name
                            <Chevron dir="down" color="#4c607a" />
                        </HeaderName>
                        <HeaderType>Type</HeaderType>
                    </HeaderRow>
                    <GroupHead $top={7} $bottom={3}>
                        <HeadChevron><Chevron dir="down" color="#6f7f9b" size={10} /></HeadChevron>
                        Today (1)
                        <GroupRule />
                    </GroupHead>
                    <FileRow $selected>
                        <FileIcon><ScriptIcon /></FileIcon>
                        <FileMeta>5/23/2025 3:46 PM</FileMeta>
                        <FileName $tight>Запит ГУ ДПС України СЕД 22.05.2025- 004588811.pdf.js</FileName>
                        <FileMeta>JavaScript File</FileMeta>
                    </FileRow>
                    <GroupHead $top={4} $bottom={3}>
                        <HeadChevron><Chevron dir="down" color="#6f7f9b" size={10} /></HeadChevron>
                        A long time ago (6)
                        <GroupRule />
                    </GroupHead>
                    {files.map(([date, name, type]) => (
                        <FileRow key={name}>
                            <FileIcon><ImageFileIcon /></FileIcon>
                            <FileMeta>{date}</FileMeta>
                            <FileName>{name}</FileName>
                            <FileMeta>{type}</FileMeta>
                        </FileRow>
                    ))}
                </FileScrollArea>
                <HScroll>
                    <HCell><Chevron dir="left" color="#444" /></HCell>
                    <HThumb />
                    <Spacer />
                    <HCell><Chevron dir="right" color="#444" /></HCell>
                </HScroll>
            </FilePane>
        </Panes>
        <StatusBar>
            7 items
            <StatusGap $w={21} />
            1 item selected
            <StatusGap $w={6} />
            7.66 MB
            <ViewSwitch>
                <ViewBtn $on>
                    <svg width="14" height="12" viewBox="0 0 14 12" fill="none"><path d="M0 1.500h4M0 5.500h4M0 9.500h4M6 1.500h8M6 5.500h8M6 9.500h8" stroke="#3a6ea5" strokeWidth="2" /></svg>
                </ViewBtn>
                <ViewBtn>
                    <svg width="14" height="12" viewBox="0 0 14 12" fill="none"><path d="M.5.500h13v11H.5z" fill="#cfe2f5" stroke="#6f8398" /><path d="M2 2h5v4H2z" fill="#4d82ba" /></svg>
                </ViewBtn>
            </ViewSwitch>
        </StatusBar>
    </Explorer>
);

const AcrobatBody = () => (
    <DocArea>
        <LeftRail>
            <LockTool />
            <PagesTool />
            <ClipTool />
        </LeftRail>
        <Gutter><Triangle /></Gutter>
        <PageView>
            <PageLight><PageHeading>Системою електронного</PageHeading></PageLight>
            <PageDark />
        </PageView>
        <DocScroll>
            <ArrowCell><Chevron dir="up" color="#333" /></ArrowCell>
            <DocThumb />
            <ArrowCell><Chevron dir="down" color="#333" /></ArrowCell>
        </DocScroll>
        <GutterRight><Triangle /></GutterRight>
        <RightRail>
            <RailSlot><SearchGlass /></RailSlot>
            <RailRule />
            {rightIcons.map((ic, i) => (
                <RailSlot key={i}>{ic}</RailSlot>
            ))}
            <RailClip>
                <svg width="20" height="12" viewBox="0 0 20 12" fill="none">
                    <circle cx="6" cy="6" r="6" fill="#b42cc2" />
                    <path d="M12 1c2 2 2 6 0 9" stroke="#b42cc2" strokeWidth="1.500" />
                    <path d="M16 9h2v2h-2z" fill="#b42cc2" />
                </svg>
            </RailClip>
            <RailMore><Chevron dir="down" color="#555" size={14} /></RailMore>
            <RailRule />
            <RailSlot>
                <Ico w={18} h={18}>
                    <path d="M2 1v16" stroke="#666" strokeWidth="2.600" />
                    <path d="M6 9h9M11 5l5 4-5 4" stroke="#666" strokeWidth="1.800" />
                </Ico>
            </RailSlot>
        </RightRail>
    </DocArea>
);

const AcrobatChrome = () => (
    <>
        <AppTitleBar>
            <PdfMark />
            Запит_ГУ_ДПС_України_СЕД_22.05.2025_1835467235.pdf (SECURED) - Adobe Acrobat Reader (64-bit)
            <AppControls>
                <svg width="11" height="11" viewBox="0 0 11 11"><path d="M0 5.500h11" stroke="#999" /></svg>
                <svg width="11" height="11" viewBox="0 0 11 11" fill="none"><path d="M.5 2.500h8v8h-8zM2.500 2.500v-2h8v8h-2" stroke="#999" /></svg>
                <svg width="12" height="12" viewBox="0 0 12 12"><path d="M.5.500l11 11M11.500.500l-11 11" stroke="#999" /></svg>
            </AppControls>
        </AppTitleBar>
        <MenuBar>
            <span>File</span>
            <span>Edit</span>
            <span>View</span>
            <span>Sign</span>
            <span>Window</span>
            <span>Help</span>
        </MenuBar>
        <TabRow>
            <AppTab $left={16}>Home</AppTab>
            <AppTab $left={29}>Tools</AppTab>
            <OpenTab>Запит_ГУ_ДПС_України</OpenTab>
            <TabRight>
                <HelpTool />
                <ToolGap $w={22} />
                <BellTool />
                <SignIn>Sign In</SignIn>
            </TabRight>
        </TabRow>
        <ToolRow>
            <SaveTool />
            <ToolGap $w={22} />
            <StarTool />
            <ToolGap $w={20} />
            <UploadTool />
            <ToolGap $w={21} />
            <PrintTool />
            <ToolGap $w={23} />
            <SearchTool />
            <ToolGap $w={19} />
            <UpTool />
            <Spacer />
            <LinkTool />
            <ToolGap $w={20} />
            <MailTool />
            <ToolGap $w={22} />
            <UserTool />
            <ToolGap $w={16} />
        </ToolRow>
        <AcrobatBody />
    </>
);

const TaskbarRow = () => (
    <Taskbar>
        <StartBtn>
            <svg width="16" height="16" viewBox="0 0 16 16"><path d="M0 2.300l6.500-.9v6.300H0zM7.400 1.300L16 0v7.700H7.400zM0 8.500h6.500v6.300L0 13.900zM7.400 8.500H16V16l-8.600-1.200z" fill="#fff" /></svg>
        </StartBtn>
        <TaskSearch>
            <svg width="17" height="18" viewBox="0 0 17 18" fill="none"><circle cx="10" cy="7" r="5.500" stroke="#222" /><path d="M6 11L1 17" stroke="#222" strokeWidth="1.300" /></svg>
            Type here to search
        </TaskSearch>
        <TaskSlot $w={50}>
            <svg width="16" height="18" viewBox="0 0 16 18" fill="none"><path d="M0 .5h11M0 17.500h11M.5 5.500h10v7H.5z" stroke="#fff" /><path d="M13 3h3v3h-3zM13 8h3v3h-3z" fill="#fff" /></svg>
        </TaskSlot>
        <TaskSlot $w={50} $inset={5}>
            <svg width="24" height="24" viewBox="0 0 24 24"><circle cx="12" cy="12" r="12" fill="#0f7bc4" /><path d="M1 10C3 1 20-2 24 12c0 5-8 5-8 2 0-4-15-8-15-4z" fill="#35c98a" /><path d="M6 16c0-6 8-7 10-3-4 0-5 5-1 8-4 2-9-1-9-5z" fill="#071f33" /></svg>
        </TaskSlot>
        <TaskSlot $w={48} $active $inset={0}>
            <svg width="22" height="20" viewBox="0 0 22 20"><path d="M0 0h9l2 3h11v17H0z" fill="#f6cd5b" /><path d="M0 5h22v4H0z" fill="#ffe08a" /><path d="M6 12h10v8H6z" fill="#2f89d8" /><path d="M9 15h4v5H9z" fill="#f6cd5b" /></svg>
        </TaskSlot>
        <TaskSlot $w={50}>
            <svg width="23" height="26" viewBox="0 0 23 26"><path d="M15 0c1 3 8 7 8 15 0 6-5 11-11.500 11S0 21 0 15c0-4 2-7 4-8l1 3c1-3 5-5 10-10z" fill="#ff9a1f" /><path d="M0 15c0 6 5 11 11.500 11S23 21 23 15c-3 7-15 9-23 0z" fill="#e6365c" /><circle cx="11" cy="14" r="6" fill="#7b3fd0" /></svg>
        </TaskSlot>
        <TaskSlot $w={49} $inset={4}>
            <svg width="21" height="26" viewBox="0 0 21 26"><rect width="21" height="26" rx="2" fill="#b90a0a" /><path d="M4 20c3-2 5-7 5.500-12 0-2 1.500-2 1.500 0 0 4 3 7 6 8-4-.5-8 0-13 4z" fill="none" stroke="#fff" strokeWidth="1.600" /></svg>
        </TaskSlot>
        <TaskSlot $w={49} $inset={4}>
            <svg width="22" height="26" viewBox="0 0 22 26"><path d="M7 3h15l-5 20H2z" fill="#a9cfe0" /><path d="M9 3h13l-5 20H6z" fill="#e6f2f6" /><path d="M7 3h15V0H9z" fill="#5f9bb8" /></svg>
        </TaskSlot>
        <Tray>
            <TrayIcon $w={24}><svg width="12" height="7" viewBox="0 0 12 7" fill="none"><path d="M.5 6.500L6 1l5.500 5.500" stroke="#fff" /></svg></TrayIcon>
            <TrayIcon $w={24}><svg width="14" height="16" viewBox="0 0 14 16" fill="none"><path d="M1 5h8v6H1zM9 7l4-2v6l-4-2M2 2c2-1 4-1 6 0M2 14c2 1 4 1 6 0" stroke="#fff" /></svg></TrayIcon>
            <TrayIcon $w={24}><svg width="16" height="14" viewBox="0 0 16 14" fill="none"><path d="M3.500 1.500h12v8h-12zM9 9.500v3M5 13.500h8M.5 1.500h3v5h-3" stroke="#fff" /></svg></TrayIcon>
            <TrayIcon $w={24}><svg width="16" height="14" viewBox="0 0 16 14" fill="none"><path d="M.5 5h3l3-3.500v11L3.500 9h-3zM9 4.500c1 1.500 1 3.500 0 5M11.500 3c1.500 2.500 1.500 5.500 0 8M14 1.500c2 3.500 2 7.500 0 11" stroke="#fff" /></svg></TrayIcon>
            <Clock>
                3:48 PM
                <br />
                5/23/2025
            </Clock>
            <NotifyWrap>
                <svg width="16" height="16" viewBox="0 0 16 16" fill="none"><path d="M.5 1.500h15v11h-5l-2.500 3-2.500-3h-5z" stroke="#fff" /></svg>
            </NotifyWrap>
            <TrayEdge />
        </Tray>
    </Taskbar>
);

export default function App() {
    return (
        <Screen>
            <GlobalStyle />
            <AcrobatWindow>
                <AcrobatChrome />
            </AcrobatWindow>
            <TaskbarRow />
            <ExplorerWindow />
            <Watermark>
                <WaterText $w={62}>ANY</WaterText>
                <WaterLogo>
                    <svg width="60" height="62" viewBox="0 0 60 62" fill="none">
                        <path d="M12 2h2l44 28-38 30" stroke="currentColor" strokeWidth="3.500" />
                        <path d="M14 14v34l28-18-20-12" stroke="currentColor" strokeWidth="3.500" />
                        <path d="M5 14v30l15 16" stroke="currentColor" strokeWidth="3" />
                    </svg>
                </WaterLogo>
                <WaterText $w={60}>RUN</WaterText>
            </Watermark>
        </Screen>
    );
}
